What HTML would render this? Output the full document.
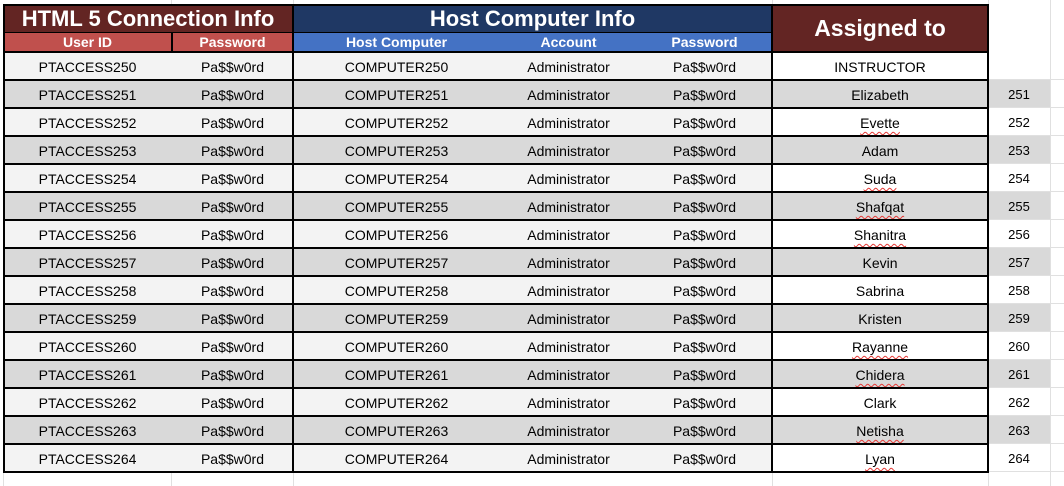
<!DOCTYPE html>
<html><head><meta charset="utf-8"><style>
*{margin:0;padding:0;box-sizing:border-box}
body{width:1064px;height:486px;background:#fff;position:relative;overflow:hidden;font-family:"Liberation Sans",Arial,sans-serif;font-size:14px;color:#000}
.a{position:absolute}
.c{position:absolute;height:28px;line-height:30px;text-align:center;white-space:nowrap}
.gl{position:absolute;background:#e0e0e0}
.bk{position:absolute;background:#000}
.w{text-decoration:underline wavy #e53935;text-decoration-thickness:1px;text-underline-offset:3px}
.h{color:#fff;font-weight:bold;text-align:center;position:absolute;white-space:nowrap}
</style></head><body>
<div class="gl" style="left:171px;top:0;width:1px;height:486px"></div>
<div class="gl" style="left:293px;top:0;width:1px;height:486px"></div>
<div class="gl" style="left:772px;top:0;width:1px;height:486px"></div>
<div class="gl" style="left:988px;top:0;width:1px;height:486px"></div>
<div class="gl" style="left:1050px;top:0;width:1px;height:486px"></div>
<div class="gl" style="left:3px;top:472px;width:1px;height:14px"></div>
<div id="rows"></div>
<div class="a" style="left:3px;top:5px;width:290px;height:28px;background:#632523"></div>
<div class="h" style="left:3px;top:5px;width:290px;height:28px;line-height:28px;font-size:22px">HTML 5 Connection Info</div>
<div class="a" style="left:293px;top:5px;width:479px;height:28px;background:#1f3864"></div>
<div class="h" style="left:293px;top:5px;width:479px;height:28px;line-height:28px;font-size:22px">Host Computer Info</div>
<div class="a" style="left:772px;top:5px;width:216px;height:47px;background:#632523"></div>
<div class="h" style="left:772px;top:5px;width:216px;height:47px;line-height:47px;font-size:23px">Assigned to</div>
<div class="a" style="left:3px;top:33px;width:290px;height:19px;background:#c0504d"></div>
<div class="a" style="left:293px;top:33px;width:479px;height:19px;background:#4472c4"></div>
<div class="h" style="left:3px;top:33px;width:169px;line-height:19px;font-size:14px">User ID</div>
<div class="h" style="left:172px;top:33px;width:121px;line-height:19px;font-size:14px">Password</div>
<div class="h" style="left:293px;top:33px;width:207px;line-height:19px;font-size:14px">Host Computer</div>
<div class="h" style="left:500px;top:33px;width:137px;line-height:19px;font-size:14px">Account</div>
<div class="h" style="left:637px;top:33px;width:135px;line-height:19px;font-size:14px">Password</div>
<div class="bk" style="left:171px;top:33px;width:2px;height:19px"></div>
<div id="lines"></div>
<script>
var names=["INSTRUCTOR","Elizabeth","Evette","Adam","Suda","Shafqat","Shanitra","Kevin","Sabrina","Kristen","Rayanne","Chidera","Clark","Netisha","Lyan"];
var wavy={Evette:1,Suda:1,Shafqat:1,Shanitra:1,Rayanne:1,Chidera:1,Netisha:1,Lyan:1};
var h="";
for(var i=0;i<15;i++){
 var t=52+28*i,n=250+i,g=(i%2==1);
 var bg=g?"#d9d9d9":"#f3f3f3",bg2=g?"#d9d9d9":"#fff";
 h+='<div class="a" style="left:3px;top:'+t+'px;width:769px;height:28px;background:'+bg+'"></div>';
 h+='<div class="a" style="left:772px;top:'+t+'px;width:216px;height:28px;background:'+bg2+'"></div>';
 if(g)h+='<div class="a" style="left:988px;top:'+t+'px;width:62px;height:28px;background:#d9d9d9"></div>';
 h+='<div class="c" style="left:3px;top:'+t+'px;width:169px">PTACCESS'+n+'</div>';
 h+='<div class="c" style="left:172px;top:'+t+'px;width:121px">Pa$$w0rd</div>';
 h+='<div class="c" style="left:293px;top:'+t+'px;width:207px">COMPUTER'+n+'</div>';
 h+='<div class="c" style="left:500px;top:'+t+'px;width:137px">Administrator</div>';
 h+='<div class="c" style="left:637px;top:'+t+'px;width:135px">Pa$$w0rd</div>';
 h+='<div class="c" style="left:772px;top:'+t+'px;width:216px"><span'+(wavy[names[i]]?' class="w"':'')+'>'+names[i]+'</span></div>';
 if(i>0)h+='<div class="c" style="left:988px;top:'+t+'px;width:62px;font-size:13px">'+n+'</div>';
 h+='<div class="gl" style="left:988px;top:'+(t+27)+'px;width:76px;height:1px"></div>';
}
document.getElementById("rows").outerHTML=h;
var l="";
for(var i=0;i<=15;i++){var t=52+28*i;l+='<div class="bk" style="left:3px;top:'+(t-1)+'px;width:986px;height:2px"></div>';}
l+='<div class="bk" style="left:3px;top:4px;width:986px;height:2px"></div>';
l+='<div class="bk" style="left:3px;top:4px;width:2px;height:469px"></div>';
l+='<div class="bk" style="left:292px;top:4px;width:2px;height:469px"></div>';
l+='<div class="bk" style="left:771px;top:4px;width:2px;height:469px"></div>';
l+='<div class="bk" style="left:987px;top:4px;width:2px;height:469px"></div>';
l+='<div class="bk" style="left:3px;top:32px;width:769px;height:1px"></div>';
document.getElementById("lines").outerHTML=l;
</script>
</body></html>
